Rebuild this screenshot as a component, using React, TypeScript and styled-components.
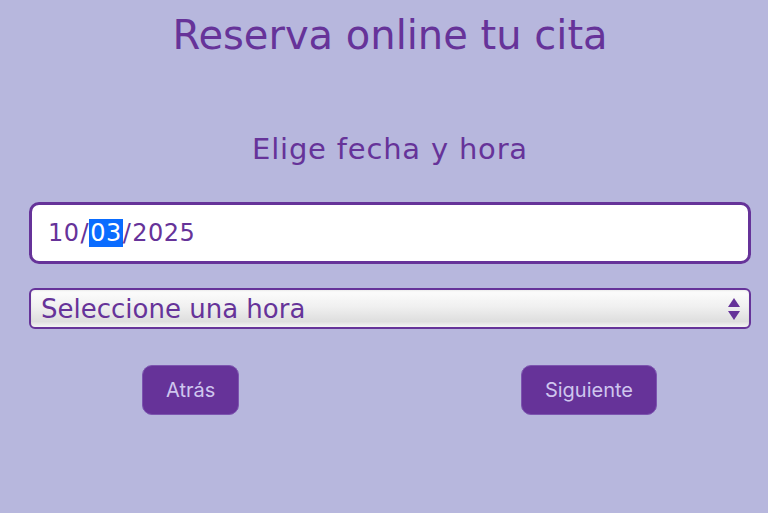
import styled, { createGlobalStyle } from 'styled-components';

const GlobalStyle = createGlobalStyle`
	html, body {
		margin: 0;
		padding: 0;
		background: #b7b7dd;
	}
	* {
		box-sizing: border-box;
	}
`;

const Page = styled.div`
	width: 768px;
	height: 513px;
	background: #b7b7dd;
	font-family: 'DejaVu Sans', 'Noto Sans', sans-serif;
	color: #663399;
	padding: 0 17px 0 29px;
	overflow: hidden;
`;

const Title = styled.h1`
	margin: 0;
	padding-top: 10px;
	font-size: 40px;
	font-weight: 400;
	text-align: center;
	line-height: 50px;
`;

const Subtitle = styled.h2`
	margin: 0;
	margin-top: 72px;
	font-size: 29px;
	font-weight: 400;
	text-align: center;
	line-height: 34px;
	letter-spacing: 0.8px;
`;

const Form = styled.form`
	display: flex;
	flex-direction: column;
	margin-top: 36px;
`;

const DateField = styled.div`
	height: 62px;
	background: #fff;
	border: 3px solid #663399;
	border-radius: 10px;
	display: flex;
	align-items: center;
	padding-left: 15px;
	font-size: 24px;
	letter-spacing: 0.5px;
	color: #663399;
`;

const Segment = styled.span<{ $active?: boolean }>`
	display: inline-block;
	line-height: 28px;
	padding: 0 1px;
	background: ${(p) => (p.$active ? '#0a6cff' : 'transparent')};
	color: ${(p) => (p.$active ? '#fff' : '#663399')};
`;

const SelectBox = styled.div`
	margin-top: 24px;
	height: 41px;
	border: 2px solid #663399;
	border-radius: 6px;
	background: linear-gradient(#fdfdfd 0%, #f0f0f0 45%, #dedede 85%, #f4f4f4 100%);
	box-shadow: inset 0 1px 2px rgba(0, 0, 0, 0.08);
	display: flex;
	align-items: center;
	justify-content: space-between;
	padding: 0 8px 0 10px;
	font-size: 26px;
	color: #663399;
`;

const Arrows = styled.svg`
	width: 14px;
	height: 24px;
	display: block;
`;

const ButtonRow = styled.div`
	display: flex;
	justify-content: space-between;
	margin-top: 36px;
	padding: 0 94px 0 113px;
`;

const Button = styled.button`
	height: 50px;
	padding: 0 23px;
	background: #663399;
	color: #cfc6ee;
	border: 1px solid #7d55b0;
	border-radius: 10px;
	font-family: Inter, 'Liberation Sans', sans-serif;
	font-size: 20px;
	cursor: pointer;
`;

export default function App() {
	return (
		<Page>
			<GlobalStyle />
			<Title>Reserva online tu cita</Title>
			<Subtitle>Elige fecha y hora</Subtitle>
			<Form onSubmit={(e) => e.preventDefault()}>
				<DateField>
					<Segment>10</Segment>/<Segment $active>03</Segment>/<Segment>2025</Segment>
				</DateField>
				<SelectBox>
					<span>Seleccione una hora</span>
					<Arrows viewBox="0 0 14 24">
						<path d="M7 1 L13 10 L1 10 Z" fill="#663399" />
						<path d="M1 14 L13 14 L7 23 Z" fill="#663399" />
					</Arrows>
				</SelectBox>
				<ButtonRow>
					<Button type="button">Atrás</Button>
					<Button type="submit">Siguiente</Button>
				</ButtonRow>
			</Form>
		</Page>
	);
}
